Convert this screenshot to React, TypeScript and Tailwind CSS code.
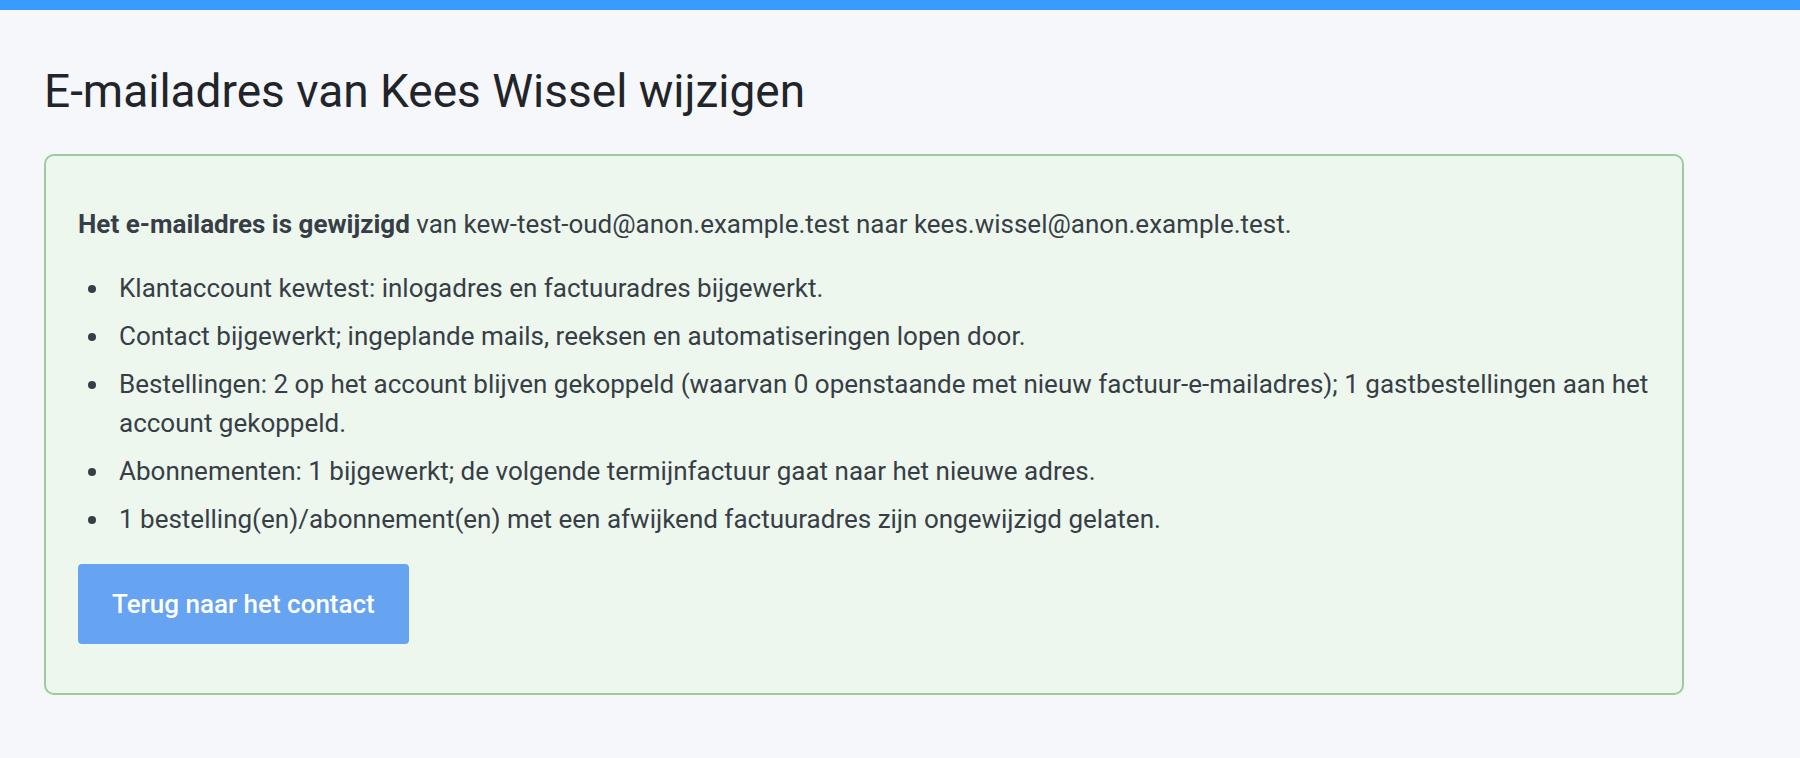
import React from 'react';

const items: string[] = [
  'Klantaccount kewtest: inlogadres en factuuradres bijgewerkt.',
  'Contact bijgewerkt; ingeplande mails, reeksen en automatiseringen lopen door.',
  'Bestellingen: 2 op het account blijven gekoppeld (waarvan 0 openstaande met nieuw factuur-e-mailadres); 1 gastbestellingen aan het account gekoppeld.',
  'Abonnementen: 1 bijgewerkt; de volgende termijnfactuur gaat naar het nieuwe adres.',
  '1 bestelling(en)/abonnement(en) met een afwijkend factuuradres zijn ongewijzigd gelaten.',
];

export default function App() {
  return (
    <div className="min-h-screen bg-[#f6f7fb] font-['Roboto','Liberation_Sans',sans-serif]">
      {/* Top bar */}
      <div className="h-[10px] bg-[#3a9bff]" />

      <main className="px-[44px]">
        <h1 className="mt-[54px] text-[46px] leading-[1.2] font-normal text-[#212529]">
          E-mailadres van Kees Wissel wijzigen
        </h1>

        {/* Result panel */}
        <div className="mt-[35px] w-[1640px] rounded-[10px] border-2 border-[#9ccc9a] bg-[#edf7ee] px-[32px] pt-[49px] pb-[49px] text-[26px] leading-[39px] text-[#373e46]">
          <p>
            <strong className="font-bold">Het e-mailadres is gewijzigd</strong> van kew-test-oud@anon.example.test naar
            kees.wissel@anon.example.test.
          </p>

          <ul className="mt-[25px] list-disc pl-[33px] space-y-[9px]">
            {items.map((item) => (
              <li key={item} className="pl-[8px]">
                {item}
              </li>
            ))}
          </ul>

          <button className="mt-[25px] h-[80px] rounded-[4px] bg-[#66a3f0] px-[34px] text-[26px] font-medium text-white">
            Terug naar het contact
          </button>
        </div>
      </main>
    </div>
  );
}
